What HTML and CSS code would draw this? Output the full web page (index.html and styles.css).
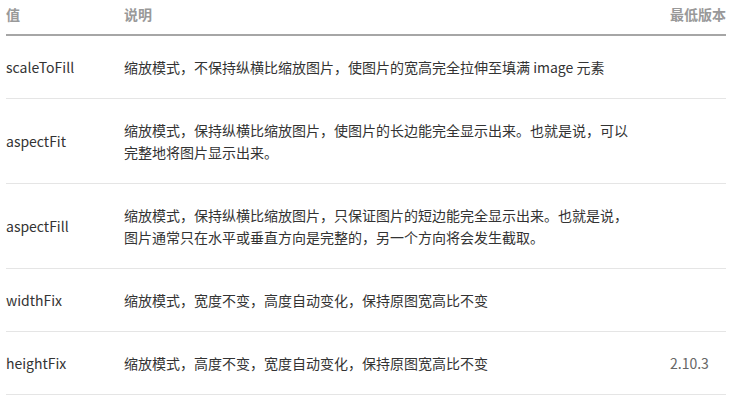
FILE: index.html
```html
<!DOCTYPE html>
<html lang="zh-CN">
<head>
    <meta charset="UTF-8">
    <meta name="viewport" content="width=device-width, initial-scale=1.0">
    <title>mode 属性</title>
    <link rel="stylesheet" href="styles.css">
</head>
<body>
    <div class="table-wrap">
        <table class="prop-table">
            <colgroup>
                <col class="col-value">
                <col class="col-desc">
                <col class="col-version">
            </colgroup>
            <thead>
                <tr>
                    <th>值</th>
                    <th>说明</th>
                    <th>最低版本</th>
                </tr>
            </thead>
            <tbody>
                <tr>
                    <td>scaleToFill</td>
                    <td class="desc">缩放模式，不保持纵横比缩放图片，使图片的宽高完全拉伸至填满 image 元素</td>
                    <td class="version"></td>
                </tr>
                <tr>
                    <td>aspectFit</td>
                    <td class="desc">缩放模式，保持纵横比缩放图片，使图片的长边能完全显示出来。也就是说，可以完整地将图片显示出来。</td>
                    <td class="version"></td>
                </tr>
                <tr>
                    <td>aspectFill</td>
                    <td class="desc">缩放模式，保持纵横比缩放图片，只保证图片的短边能完全显示出来。也就是说，图片通常只在水平或垂直方向是完整的，另一个方向将会发生截取。</td>
                    <td class="version"></td>
                </tr>
                <tr>
                    <td>widthFix</td>
                    <td class="desc">缩放模式，宽度不变，高度自动变化，保持原图宽高比不变</td>
                    <td class="version"></td>
                </tr>
                <tr>
                    <td>heightFix</td>
                    <td class="desc">缩放模式，高度不变，宽度自动变化，保持原图宽高比不变</td>
                    <td class="version">2.10.3</td>
                </tr>
            </tbody>
        </table>
    </div>
</body>
</html>
```

FILE: styles.css
```css
/* Página base */
body {
    margin: 0;
    background-color: #ffffff;
    font-family: "Noto Sans CJK SC", "Noto Sans", sans-serif;
    font-size: 14px;
    line-height: 22px;
    color: #333333;
}

.table-wrap {
    padding: 0 6px;
}

/* Tabla de propiedades */
.prop-table {
    width: 720px;
    border-collapse: collapse;
    table-layout: fixed;
}

.col-value {
    width: 118px;
}

.col-desc {
    width: 546px;
}

.col-version {
    width: 56px;
}

.prop-table th {
    padding: 3px 0 9px;
    text-align: left;
    font-weight: bold;
    color: #999999;
    border-bottom: 2px solid #a6a6a6;
    white-space: nowrap;
}

.prop-table td {
    padding: 20px 0;
    vertical-align: middle;
    border-bottom: 1px solid #e5e5e5;
}

.prop-table td.desc {
    padding-right: 36px;
}

.prop-table td.version {
    color: #666666;
}
```
